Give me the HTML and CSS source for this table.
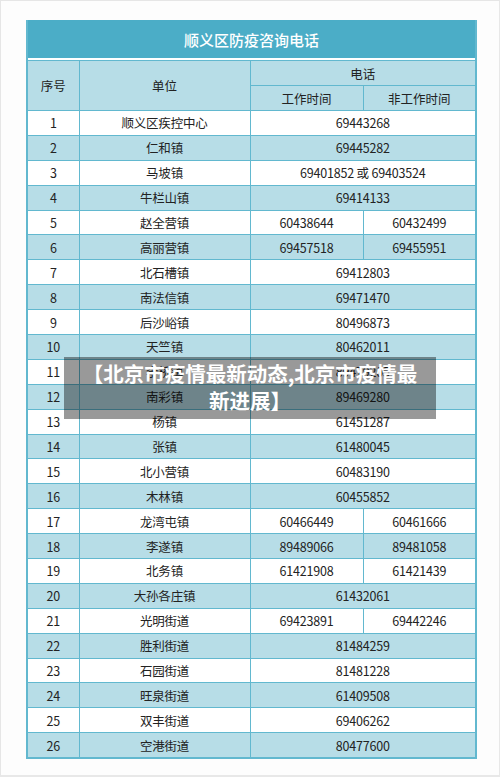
FILE: index.html
```html
<!DOCTYPE html>
<html lang="zh">
<head>
<meta charset="utf-8">
<link rel="stylesheet" href="styles.css">
</head>
<body>
<div class="frame">
  <table class="sheet">
    <colgroup>
      <col class="c1"><col class="c2"><col class="c3"><col class="c4">
    </colgroup>
    <thead>
      <tr class="title"><th colspan="4">顺义区防疫咨询电话</th></tr>
      <tr class="gap"><td colspan="4"></td></tr>
      <tr class="h1"><th rowspan="2">序号</th><th rowspan="2">单位</th><th colspan="2">电话</th></tr>
      <tr class="h2"><th>工作时间</th><th>非工作时间</th></tr>
    </thead>
    <tbody>
      <tr><td>1</td><td>顺义区疾控中心</td><td colspan="2">69443268</td></tr>
      <tr><td>2</td><td>仁和镇</td><td colspan="2">69445282</td></tr>
      <tr><td>3</td><td>马坡镇</td><td colspan="2">69401852 或 69403524</td></tr>
      <tr><td>4</td><td>牛栏山镇</td><td colspan="2">69414133</td></tr>
      <tr><td>5</td><td>赵全营镇</td><td>60438644</td><td>60432499</td></tr>
      <tr><td>6</td><td>高丽营镇</td><td>69457518</td><td>69455951</td></tr>
      <tr><td>7</td><td>北石槽镇</td><td colspan="2">69412803</td></tr>
      <tr><td>8</td><td>南法信镇</td><td colspan="2">69471470</td></tr>
      <tr><td>9</td><td>后沙峪镇</td><td colspan="2">80496873</td></tr>
      <tr><td>10</td><td>天竺镇</td><td colspan="2">80462011</td></tr>
      <tr><td>11</td><td>李桥镇</td><td colspan="2">89479205</td></tr>
      <tr><td>12</td><td>南彩镇</td><td colspan="2">89469280</td></tr>
      <tr><td>13</td><td>杨镇</td><td colspan="2">61451287</td></tr>
      <tr><td>14</td><td>张镇</td><td colspan="2">61480045</td></tr>
      <tr><td>15</td><td>北小营镇</td><td colspan="2">60483190</td></tr>
      <tr><td>16</td><td>木林镇</td><td colspan="2">60455852</td></tr>
      <tr><td>17</td><td>龙湾屯镇</td><td>60466449</td><td>60461666</td></tr>
      <tr><td>18</td><td>李遂镇</td><td>89489066</td><td>89481058</td></tr>
      <tr><td>19</td><td>北务镇</td><td>61421908</td><td>61421439</td></tr>
      <tr><td>20</td><td>大孙各庄镇</td><td colspan="2">61432061</td></tr>
      <tr><td>21</td><td>光明街道</td><td>69423891</td><td>69442246</td></tr>
      <tr><td>22</td><td>胜利街道</td><td colspan="2">81484259</td></tr>
      <tr><td>23</td><td>石园街道</td><td colspan="2">81481228</td></tr>
      <tr><td>24</td><td>旺泉街道</td><td colspan="2">61409508</td></tr>
      <tr><td>25</td><td>双丰街道</td><td colspan="2">69406262</td></tr>
      <tr><td>26</td><td>空港街道</td><td colspan="2">80477600</td></tr>
    </tbody>
  </table>
  <div class="banner">【北京市疫情最新动态,北京市疫情最新进展】</div>
</div>
</body>
</html>
```

FILE: styles.css
```css
html, body {
  margin: 0;
  padding: 0;
  background: #ffffff;
}
.frame {
  position: relative;
  box-sizing: border-box;
  width: 500px;
  height: 777px;
  border-top: 1px solid #e6e6e6;
  border-left: 1px solid #e6e6e6;
  border-bottom: 2px solid #e8e8e8;
  border-right: 1px solid #e8e8e8;
  background: #fdfdfd;
  padding: 19px 0 0 25px;
  font-family: "Noto Sans CJK SC", "Noto Sans", sans-serif;
}
.sheet {
  border-collapse: collapse;
  table-layout: fixed;
  width: 449px;
  color: #222;
  font-size: 12.5px;
}
.c1 { width: 52px; }
.c2 { width: 171px; }
.c3 { width: 113px; }
.c4 { width: 113px; }
.sheet td, .sheet th {
  border: 1px solid #62b8cf;
  text-align: center;
  padding: 0;
  font-weight: 400;
  line-height: 15px;
}
.sheet tbody td {
  letter-spacing: -0.2px;
}
.sheet .title th {
  height: 37px;
  background: #4badc7;
  color: #fff;
  font-size: 15px;
  font-weight: 500;
  border: 1px solid #4badc7;
  border-bottom: none;
}
.sheet .gap td {
  height: 2px;
  background: #fff;
  border: none;
  border-left: 2px solid #62b8cf;
  border-right: 2px solid #62b8cf;
}
.sheet .h1 th, .sheet .h2 th {
  background: #b7dde7;
  height: 24px;
}
.sheet tbody td {
  height: 23.9px;
}
.sheet tbody tr:nth-child(odd) td {
  background: #ffffff;
}
.sheet tbody tr:nth-child(even) td {
  background: #b7dde7;
}
.sheet tr > :first-child {
  border-left: 2px solid #62b8cf;
}
.sheet tr > :last-child {
  border-right: 2px solid #62b8cf;
}
.sheet .h2 > :first-child {
  border-left: 1px solid #62b8cf;
}
.sheet tbody tr:last-child td {
  border-bottom: 2px solid #62b8cf;
}
.banner {
  position: absolute;
  left: 63px;
  top: 356px;
  box-sizing: border-box;
  width: 372px;
  height: 62px;
  padding: 3px 13px 0;
  background: rgba(0, 0, 0, 0.4);
  color: #fff;
  font-size: 20.5px;
  font-weight: 700;
  line-height: 27px;
  text-align: center;
}
```
